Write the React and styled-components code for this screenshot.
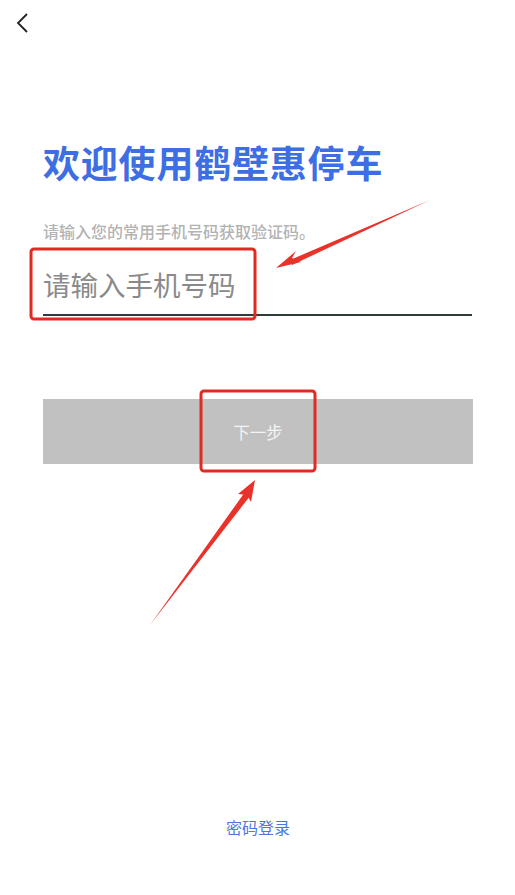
import React from 'react'
import styled, { createGlobalStyle } from 'styled-components'

const Global = createGlobalStyle`
  html, body { margin: 0; padding: 0; background: #fff; }
  body { font-family: "Noto Sans CJK SC", "Noto Sans", sans-serif; }
  * { box-sizing: border-box; }
`

const Page = styled.div`
  position: relative;
  width: 515px;
  height: 895px;
  display: flex;
  flex-direction: column;
  background: #fff;
  overflow: hidden;
`

const TopBar = styled.div`
  height: 48px;
  padding: 12px 0 0 13px;
`

const Back = styled.button`
  border: 0;
  background: none;
  padding: 0;
  width: 18px;
  height: 24px;
  cursor: pointer;
`

const Body = styled.div`
  flex: 1;
  display: flex;
  flex-direction: column;
  padding: 90px 43px 0 43px;
`

const Title = styled.h1`
  margin: 0;
  font-size: 37px;
  line-height: 48px;
  font-weight: 700;
  color: #3d6ee3;
  letter-spacing: 0.8px;
`

const Hint = styled.p`
  margin: 34px 0 0 0;
  font-size: 16px;
  line-height: 22px;
  font-weight: 500;
  color: #b3b3b3;
`

const Field = styled.input`
  margin-top: 16px;
  width: 429px;
  height: 58px;
  border: 0;
  border-bottom: 2px solid #2f3b3b;
  outline: none;
  padding: 0 0 4px 0;
  font-family: inherit;
  font-size: 27.5px;
  color: #333;
  background: transparent;
  &::placeholder { color: #8a8a8a; }
`

const Next = styled.button`
  margin-top: 83px;
  width: 430px;
  height: 65px;
  border: 0;
  background: #c1c1c1;
  color: #f4f4f4;
  font-family: inherit;
  font-size: 16.5px;
`

const Spacer = styled.div`
  flex: 1;
`

const Footer = styled.div`
  display: flex;
  justify-content: center;
  padding-bottom: 56px;
`

const Link = styled.a`
  font-size: 16px;
  color: #4a78dd;
  text-decoration: none;
  padding-left: 1px;
`

const Marks = styled.svg`
  position: absolute;
  left: 0;
  top: 0;
  pointer-events: none;
`

const App = () => {
  return (
    <>
      <Global />
      <Page>
        <TopBar>
          <Back aria-label="返回">
            <svg width="14" height="22" viewBox="0 0 14 22">
              <path d="M12 2 L3 11 L12 20" fill="none" stroke="#222" strokeWidth="1.8" />
            </svg>
          </Back>
        </TopBar>
        <Body>
          <Title>欢迎使用鹤壁惠停车</Title>
          <Hint>请输入您的常用手机号码获取验证码。</Hint>
          <Field type="tel" placeholder="请输入手机号码" />
          <Next>下一步</Next>
          <Spacer />
          <Footer>
            <Link href="#">密码登录</Link>
          </Footer>
        </Body>

        <Marks width="515" height="895" viewBox="0 0 515 895">
          <rect x="31" y="249" width="224" height="70" rx="3" fill="none" stroke="#e02a22" strokeWidth="3" />
          <rect x="201" y="391" width="114" height="80" rx="3" fill="none" stroke="#e02a22" strokeWidth="3" />
          <path d="M430 200 L290 260 L292 265 Z" fill="#e8322a" />
          <path d="M276 268 L296 251 L292 258 L301 262 Z" fill="#e8322a" />
          <path d="M150 625 L245 492 L250 496 Z" fill="#e8322a" />
          <path d="M255 480 L251 502 L247 495 L238 494 Z" fill="#e8322a" />
        </Marks>
      </Page>
    </>
  )
}

export default App
